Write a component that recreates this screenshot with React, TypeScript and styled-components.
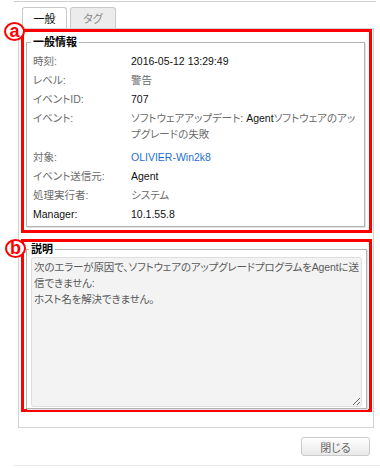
import React from 'react';
import styled, { createGlobalStyle } from 'styled-components';

const GlobalStyle = createGlobalStyle`
  html, body {
    margin: 0;
    padding: 0;
    background: #fff;
  }
  body {
    font-family: "Liberation Sans", "Noto Sans CJK JP", sans-serif;
    font-size: 10.5px;
    color: #6a6a6a;
    font-feature-settings: "palt";
  }
`;

const Frame = styled.div`
  width: 380px;
  height: 468px;
  box-sizing: border-box;
  padding-top: 1px;
  overflow: hidden;
`;

const TopRule = styled.div`
  margin: 0 4px 0 14px;
  border-top: 1px solid #cfcfcf;
`;

const Body = styled.div`
  padding: 0 6px 0 18px;
`;

const TabBar = styled.div`
  display: flex;
  gap: 3px;
  margin-top: 5px;
  padding-left: 4px;
`;

const Tab = styled.div<{ $active?: boolean }>`
  box-sizing: border-box;
  width: ${(p) => (p.$active ? 45 : 46)}px;
  height: 21px;
  display: flex;
  align-items: center;
  justify-content: center;
  border: 1px solid #c9c9c9;
  border-bottom: none;
  border-radius: 3px 3px 0 0;
  background: ${(p) => (p.$active ? '#fff' : '#ececec')};
  color: ${(p) => (p.$active ? '#111' : '#8a8a8a')};
  font-size: 11px;
`;

const Panel = styled.div`
  border: 1px solid #d2d2d2;
  padding: 0 1px 15px 2px;
`;

// red annotation frame drawn over the screenshot
const Annot = styled.section<{ $pad: string; $gap?: number }>`
  position: relative;
  border: 3px solid #f00;
  padding: ${(p) => p.$pad};
  margin-top: ${(p) => p.$gap ?? 0}px;
`;

const Badge = styled.span<{ $top: number; $left: number }>`
  position: absolute;
  left: ${(p) => p.$left}px;
  top: ${(p) => p.$top}px;
  box-sizing: border-box;
  width: 21px;
  height: 19px;
  border: 2px solid #f00;
  border-radius: 50%;
  background: #fff;
  color: #f00;
  font: bold 18px/14px "Liberation Sans", sans-serif;
  text-align: center;
`;

const Group = styled.fieldset`
  margin: 0;
  min-width: 0;
  border: 1px solid #b4b4b4;
  box-shadow: 1px 1px 0 #e2e2e2;
  padding: 4px 4px 4px 6px;
`;

const NoteGroup = styled(Group)`
  padding: 1px 4px;
`;

const Legend = styled.legend`
  padding: 0 2px;
  margin-left: -2px;
  font-weight: bold;
  font-size: 11px;
  color: #000;
  line-height: 14px;
`;

const InfoList = styled.div`
  display: flex;
  flex-direction: column;
  gap: 3px;
  line-height: 16px;
`;

const Row = styled.div<{ $extra?: number }>`
  display: flex;
  margin-bottom: ${(p) => p.$extra ?? 0}px;
`;

const Label = styled.div`
  flex: none;
  width: 98px;
`;

const Value = styled.div`
  flex: 1;
  min-width: 0;
`;

const Lat = styled.span`
  color: #111;
`;

const Link = styled.span`
  color: #1f6fd1;
`;

const Notes = styled.textarea`
  display: block;
  box-sizing: border-box;
  width: 100%;
  height: 150px;
  margin: 0;
  padding: 1px 2px;
  border: 1px solid #dedede;
  border-radius: 3px;
  background: #f3f3f3;
  color: #5a5a5a;
  font: 10.5px/16px "Liberation Sans", "Noto Sans CJK JP", sans-serif;
  font-feature-settings: "palt";
  letter-spacing: -0.15px;
  resize: both;
  outline: none;
`;

const Footer = styled.div`
  display: flex;
  justify-content: flex-end;
  padding: 9px 4px 0 0;
`;

const CloseButton = styled.button`
  box-sizing: border-box;
  width: 69px;
  height: 19px;
  padding: 0;
  border: 1px solid #cbcbcb;
  border-radius: 3px;
  background: linear-gradient(#ffffff, #e9e9e9);
  color: #666;
  font: 11px "Liberation Sans", "Noto Sans CJK JP", sans-serif;
  font-feature-settings: "palt";
`;

const BottomRule = styled.div`
  margin: 9px 0 0 14px;
  border-top: 1px solid #e8e8e8;
`;

const info: { label: React.ReactNode; value: React.ReactNode; extra?: number }[] = [
  { label: '時刻:', value: <Lat>2016-05-12 13:29:49</Lat> },
  { label: 'レベル:', value: '警告' },
  { label: 'イベントID:', value: <Lat>707</Lat> },
  {
    label: 'イベント:',
    value: (
      <>
        ソフトウェアアップデート: <Lat>Agent</Lat>ソフトウェアのアップグレードの失敗
      </>
    ),
    extra: 4,
  },
  { label: '対象:', value: <Link>OLIVIER-Win2k8</Link> },
  { label: 'イベント送信元:', value: <Lat>Agent</Lat> },
  { label: '処理実行者:', value: 'システム' },
  { label: <Lat>Manager:</Lat>, value: <Lat>10.1.55.8</Lat> },
];

const noteText =
  '次のエラーが原因で、ソフトウェアのアップグレードプログラムをAgentに送信できません:\nホスト名を解決できません。';

export default function App() {
  return (
    <Frame>
      <GlobalStyle />
      <TopRule />
      <Body>
        <TabBar>
          <Tab $active>一般</Tab>
          <Tab>タグ</Tab>
        </TabBar>
        <Panel>
          <Annot $pad="3px 4px 3px 2px">
            <Badge $left={-20} $top={-10}>a</Badge>
            <Group>
              <Legend>一般情報</Legend>
              <InfoList>
                {info.map((r, i) => (
                  <Row key={i} $extra={r.extra}>
                    <Label>{r.label}</Label>
                    <Value>{r.value}</Value>
                  </Row>
                ))}
              </InfoList>
            </Group>
          </Annot>
          <Annot $pad="0 2px 0 2px" $gap={6}>
            <Badge $left={-19} $top={-3}>b</Badge>
            <NoteGroup>
              <Legend>説明</Legend>
              <Notes readOnly value={noteText} />
            </NoteGroup>
          </Annot>
        </Panel>
        <Footer>
          <CloseButton>閉じる</CloseButton>
        </Footer>
      </Body>
      <BottomRule />
    </Frame>
  );
}
